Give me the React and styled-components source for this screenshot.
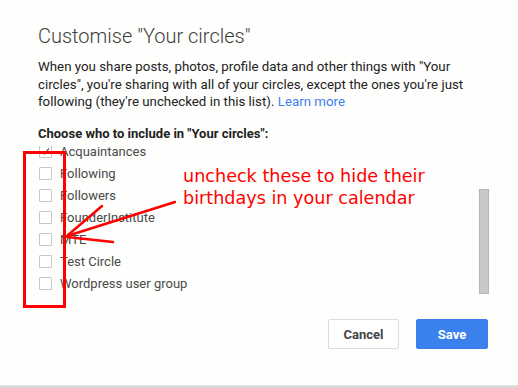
import React, { useLayoutEffect, useRef } from "react";
import styled, { createGlobalStyle } from "styled-components";

const GlobalStyle = createGlobalStyle`
  html, body {
    margin: 0;
    padding: 0;
    background: #fefefc;
  }
  body {
    font-family: Roboto, "Liberation Sans", Arial, sans-serif;
  }
`;

const Page = styled.div`
  position: relative;
  width: 518px;
  height: 388px;
  display: flex;
  flex-direction: column;
  overflow: hidden;
`;

const Dialog = styled.div`
  flex: 1;
  display: flex;
  flex-direction: column;
  padding: 22px 29px 0 38px;
  background: #fefefc;
`;

const Title = styled.h1`
  margin: 0;
  font-size: 20px;
  font-weight: 300;
  line-height: 28px;
  color: #3c3c3c;
`;

const Intro = styled.p`
  margin: 8px 0 0;
  font-size: 13.3px;
  line-height: 17.7px;
  color: #222;
  white-space: nowrap;
`;

const Link = styled.a`
  color: #427fed;
  text-decoration: none;
`;

const Label = styled.div`
  margin-top: 14px;
  font-size: 13px;
  font-weight: 700;
  line-height: 18px;
  color: #222;
`;

const ListArea = styled.div`
  display: flex;
  margin-top: 3px;
  height: 148px;
`;

const CircleList = styled.ul`
  flex: 1;
  list-style: none;
  margin: 0;
  padding: 10px 0 0;
  box-sizing: border-box;
  overflow: hidden;
`;

const ScrollTrack = styled.div`
  width: 10px;
  display: flex;
  flex-direction: column;
`;

const ScrollThumb = styled.div`
  box-sizing: border-box;
  background: #c8c8c6;
  border: 1px solid #b4b4b2;
`;

const Row = styled.li`
  height: 22px;
  display: flex;
  align-items: center;
  gap: 8px;
  padding-left: 1px;
  font-size: 13px;
  color: #4a4a4a;
`;

const Box = styled.span`
  width: 13px;
  height: 13px;
  box-sizing: border-box;
  border: 1px solid #c6c6c6;
  border-radius: 1px;
  background: #fff;
  display: flex;
  align-items: center;
  justify-content: center;
`;

const Footer = styled.div`
  display: flex;
  justify-content: flex-end;
  gap: 17px;
  margin-top: 25px;
  padding-right: 1px;
`;

const Button = styled.button`
  width: ${({ $w }) => $w}px;
  height: 30px;
  border-radius: 2px;
  font-family: Roboto, "Liberation Sans", Arial, sans-serif;
  font-size: 13px;
  font-weight: 700;
  cursor: pointer;
  border: 1px solid ${({ $primary }) => ($primary ? "#3b7fea" : "#dcdcdc")};
  background: ${({ $primary }) => ($primary ? "#3a81ee" : "#fff")};
  color: ${({ $primary }) => ($primary ? "#fff" : "#444")};
`;

const BottomEdge = styled.div`
  height: 3px;
  background: linear-gradient(#e4e4e2, #d2d2d0);
`;

const Marker = styled.div`
  position: absolute;
  left: 23px;
  top: 151px;
  width: 43px;
  height: 157px;
  box-sizing: border-box;
  border: 3px solid #ff0000;
  pointer-events: none;
`;

const Note = styled.div`
  position: absolute;
  left: 183px;
  top: 165px;
  font-family: "DejaVu Sans", sans-serif;
  font-size: 17.6px;
  line-height: 22px;
  color: #ff0000;
  pointer-events: none;
`;

const Arrows = styled.svg`
  position: absolute;
  left: 0;
  top: 0;
  pointer-events: none;
`;

const circles = [
  { name: "Friends", checked: true },
  { name: "Family", checked: true },
  { name: "Acquaintances", checked: true },
  { name: "Following" },
  { name: "Followers" },
  { name: "FounderInstitute" },
  { name: "MTE" },
  { name: "Test Circle" },
  { name: "Wordpress user group" },
];

function Check() {
  return (
    <svg width="9" height="9" viewBox="0 0 9 9">
      <path d="M1 4.6 L3.5 7 L8 1.5" fill="none" stroke="#6a6a6a" strokeWidth="1.4" />
    </svg>
  );
}

export default function App() {
  const listRef = useRef(null);
  const [thumb, setThumb] = React.useState({ top: 41, size: 105 });

  useLayoutEffect(() => {
    const el = listRef.current;
    if (!el) return;
    el.scrollTop = el.scrollHeight;
    const view = el.clientHeight;
    const full = el.scrollHeight;
    const size = Math.round((view * view) / full);
    setThumb({ top: view - size, size });
  }, []);

  return (
    <Page>
      <GlobalStyle />
      <Dialog>
        <Title>Customise "Your circles"</Title>
        <Intro>
          When you share posts, photos, profile data and other things with "Your
          <br />
          circles", you're sharing with all of your circles, except the ones you're just
          <br />
          following (they're unchecked in this list). <Link href="#">Learn more</Link>
        </Intro>
        <Label>Choose who to include in "Your circles":</Label>
        <ListArea>
          <CircleList ref={listRef}>
            {circles.map((c) => (
              <Row key={c.name}>
                <Box>{c.checked && <Check />}</Box>
                <span>{c.name}</span>
              </Row>
            ))}
          </CircleList>
          <ScrollTrack>
            <ScrollThumb style={{ marginTop: thumb.top, height: thumb.size }} />
          </ScrollTrack>
        </ListArea>
        <Footer>
          <Button $w={71}>Cancel</Button>
          <Button $w={72} $primary>
            Save
          </Button>
        </Footer>
      </Dialog>
      <BottomEdge />

      <Marker />
      <Arrows width="518" height="388">
        <g stroke="#ff0000" strokeWidth="2.5" strokeLinecap="round" fill="none">
          <line x1="175" y1="202" x2="67" y2="236" />
          <line x1="102" y1="206" x2="68" y2="235" />
          <line x1="113" y1="242" x2="67" y2="237" />
        </g>
      </Arrows>
      <Note>
        uncheck these to hide their
        <br />
        birthdays in your calendar
      </Note>
    </Page>
  );
}
